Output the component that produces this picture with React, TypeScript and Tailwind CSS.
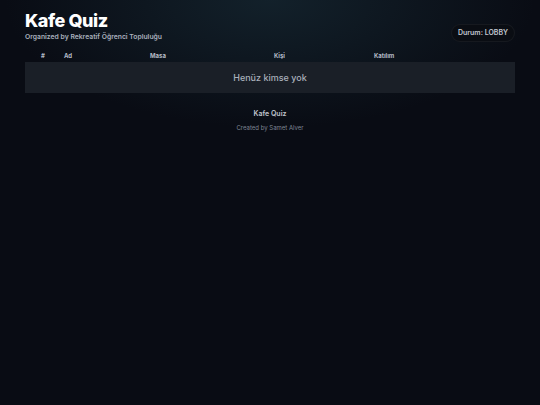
export default function App() {
  const cols = ["#", "Ad", "Masa", "Kişi", "Katılım"];

  return (
    <div
      className="relative min-h-[405px] w-full overflow-hidden bg-[#090c14] text-slate-200"
      style={{ fontFamily: "Inter, 'Noto Sans', sans-serif" }}
    >
      <div className="pointer-events-none absolute inset-0 bg-[radial-gradient(ellipse_70%_45%_at_50%_0%,rgba(30,58,70,0.45),transparent_70%)]" />

      <div className="relative px-[25px] pt-[11px]">
        <header className="flex items-start justify-between">
          <div>
            <h1 className="text-[18px] font-extrabold leading-[20px] tracking-tight text-white">
              Kafe Quiz
            </h1>
            <p className="mt-[1px] text-[6.8px] font-semibold text-[#a9b0bd]">
              Organized by Rekreatif Öğrenci Topluluğu
            </p>
          </div>
          <div className="mt-[13px] rounded-full border border-white/5 bg-[#0a0d13] px-[6px] py-[4px] text-[7px] font-semibold leading-[8px] text-[#c2c8d2]">
            Durum: LOBBY
          </div>
        </header>

        <div className="mt-[7px]">
          <div className="grid h-[13px] grid-cols-[39px_86px_124px_100px_1fr] items-center text-[6px] font-bold text-[#b4bbc6]">
            {cols.map((c, i) => (
              <div key={c} className={i === 0 ? "pl-[16px]" : ""}>
                {c}
              </div>
            ))}
          </div>
          <div className="flex h-[31px] items-center justify-center bg-[#1a1f27] text-[9px] font-medium text-[#a9b0bb]">
            Henüz kimse yok
          </div>
        </div>

        <footer className="mt-[16px] flex flex-col items-center">
          <div className="text-[7px] font-semibold text-[#c0c6cf]">Kafe Quiz</div>
          <div className="mt-[3px] text-[6px] text-[#7d8593]">Created by Samet Alver</div>
        </footer>
      </div>
    </div>
  );
}
